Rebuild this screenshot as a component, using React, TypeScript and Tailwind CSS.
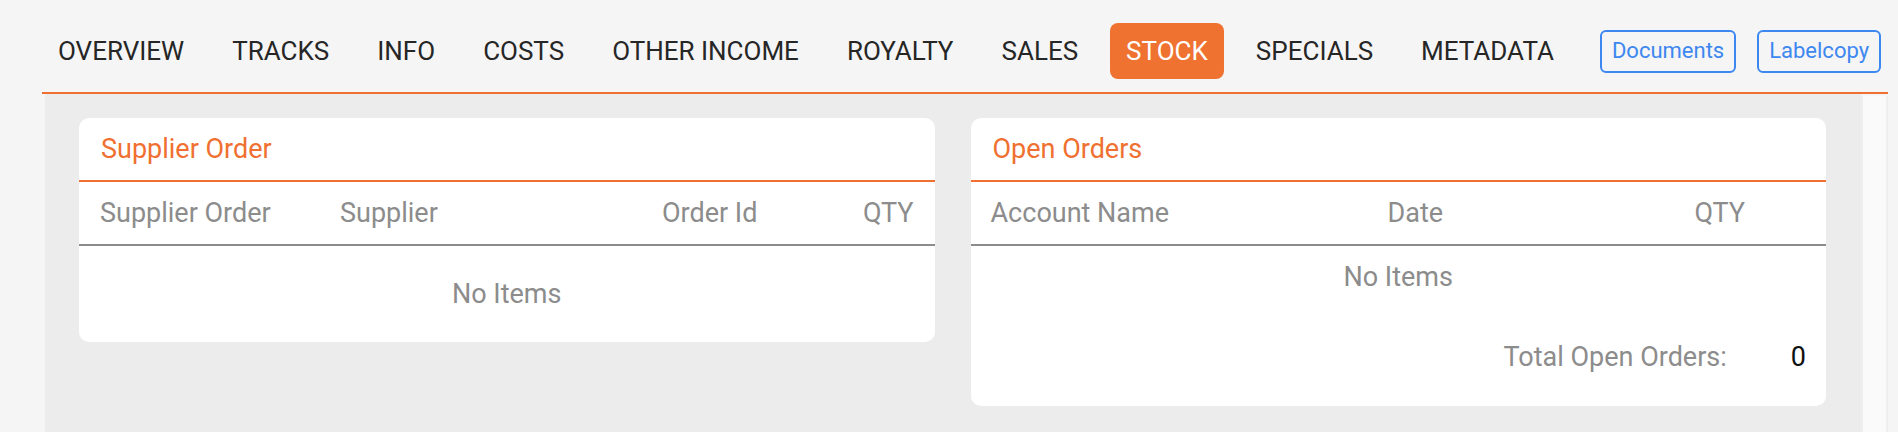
import React from "react";

const tabs = [
  "OVERVIEW",
  "TRACKS",
  "INFO",
  "COSTS",
  "OTHER INCOME",
  "ROYALTY",
  "SALES",
  "STOCK",
  "SPECIALS",
  "METADATA",
];

export default function App() {
  return (
    <div className="min-h-[432px] h-[432px] overflow-hidden bg-[#f5f5f5] font-['Roboto','Liberation_Sans',sans-serif]">
      <nav className="ml-[42px] w-[1846px] border-b-2 border-[#ef7030] flex items-center gap-[16px] pt-[23px] pb-[13px] whitespace-nowrap">
        {tabs.map((t) =>
          t === "STOCK" ? (
            <div
              key={t}
              className="shrink-0 h-[56px] px-4 flex items-center rounded-[8px] bg-[#ef7230] text-white text-[26px] leading-none"
            >
              {t}
            </div>
          ) : (
            <div
              key={t}
              className="shrink-0 h-[56px] px-4 flex items-center text-[#262626] text-[26px] leading-none"
            >
              {t}
            </div>
          )
        )}
        <button className="shrink-0 ml-[14px] h-[43px] px-[10px] flex items-center border-2 border-[#3d87f0] rounded-[6px] text-[#3d87f0] text-[22px] leading-none">
          Documents
        </button>
        <button className="shrink-0 ml-[5px] h-[43px] px-[10px] flex items-center border-2 border-[#3d87f0] rounded-[6px] text-[#3d87f0] text-[22px] leading-none">
          Labelcopy
        </button>
      </nav>
      <div className="flex h-[338px]">
        <div className="ml-[45px] w-[1816px] bg-[#ececec] pl-[34px] pr-[35px] pt-[24px]">
          <div className="grid grid-cols-2 gap-[36px] items-start text-[27px]">
            {/* Supplier Order */}
            <div className="bg-white rounded-[10px] overflow-hidden">
              <div className="h-[64px] flex items-center px-[22px] text-[#ef7030] border-b-2 border-[#ef7030]">
                Supplier Order
              </div>
              <div className="h-[64px] grid grid-cols-[240px_322px_1fr_auto] items-center px-[21px] text-[#8c8c8c] border-b-2 border-[#8c8c8c]">
                <div>Supplier Order</div>
                <div>Supplier</div>
                <div>Order Id</div>
                <div className="text-right">QTY</div>
              </div>
              <div className="h-[96px] flex items-center justify-center text-[#8c8c8c]">
                No Items
              </div>
            </div>
            {/* Open Orders */}
            <div className="bg-white rounded-[10px] overflow-hidden">
              <div className="h-[64px] flex items-center px-[22px] text-[#ef7030] border-b-2 border-[#ef7030]">
                Open Orders
              </div>
              <div className="h-[64px] grid grid-cols-[397px_307px_1fr] items-center px-[20px] text-[#8c8c8c] border-b-2 border-[#8c8c8c]">
                <div>Account Name</div>
                <div>Date</div>
                <div>QTY</div>
              </div>
              <div className="h-[62px] flex items-center justify-center text-[#8c8c8c]">
                No Items
              </div>
              <div className="mt-[18px] mb-[18px] h-[62px] flex items-center justify-end gap-[64px] pr-[20px]">
                <span className="text-[#8c8c8c]">Total Open Orders:</span>
                <span className="text-[#111111]">0</span>
              </div>
            </div>
          </div>
        </div>
        <div className="w-[27px] mt-[2px] bg-[#fafafa] border-x-2 border-[#efefef]" />
      </div>
    </div>
  );
}
